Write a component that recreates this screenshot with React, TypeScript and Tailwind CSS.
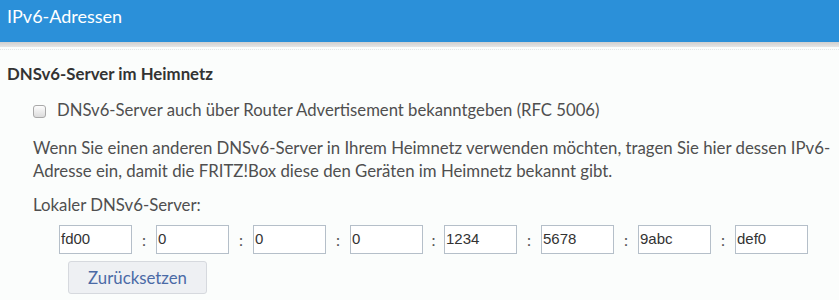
import React from "react";

const parts = ["fd00", "0", "0", "0", "1234", "5678", "9abc", "def0"];

export default function App() {
  return (
    <div className="w-[839px] h-[300px] bg-[#fbfdfc] overflow-hidden text-[#4f4f4f]" style={{ fontFamily: "Lato, 'Noto Sans', sans-serif" }}>
      <div className="h-[42px] bg-[#2b90d9] flex items-center pl-[7px]">
        <span className="text-white text-[18px] leading-none -mt-[10px]">IPv6-Adressen</span>
      </div>
      <div className="h-[5px] bg-gradient-to-b from-[#cfcfcf] to-[#e6e6e6]" />
      <div className="h-[3px] border-b border-dotted border-[#e4e6e8]" />
      <div className="pl-[7px] pt-[14px]">
        <div className="text-[16.8px] font-bold text-[#333] leading-[20px]">DNSv6-Server im Heimnetz</div>
        <div className="flex items-center mt-[17px] pl-[26px] h-[20px]">
          <span className="w-[13px] h-[13px] rounded-[3px] border border-[#a9a9a9] bg-gradient-to-b from-[#fdfdfd] to-[#dcdcdc]" />
          <span className="ml-[11px] text-[16.7px]">DNSv6-Server auch über Router Advertisement bekanntgeben (RFC 5006)</span>
        </div>
        <div className="pl-[26px] mt-[15px] text-[16.8px] leading-[23px] pr-[2px]">
          Wenn Sie einen anderen DNSv6-Server in Ihrem Heimnetz verwenden möchten, tragen Sie hier dessen IPv6-Adresse ein, damit die FRITZ!Box diese den Geräten im Heimnetz bekannt gibt.
        </div>
        <div className="pl-[26px] mt-[11px] text-[16.8px] leading-[23px]">Lokaler DNSv6-Server:</div>
        <div className="flex items-center pl-[52px] mt-[9px]">
          {parts.map((p, i) => (
            <React.Fragment key={i}>
              {i > 0 && (
                <span className={(i === 4 ? "w-[21px]" : "w-[24px]") + " text-center text-[16px] text-[#555]"}>:</span>
              )}
              <div className="w-[73px] h-[29px] border border-[#b5bfc9] bg-white flex items-center pl-[1px] text-[15px] text-[#333]" style={{ fontFamily: "'Liberation Sans', Arial, sans-serif" }}>
                {p}
              </div>
            </React.Fragment>
          ))}
        </div>
        <div className="pl-[61px] mt-[7px]">
          <button className="w-[139px] h-[33px] rounded-[3px] border border-[#d6d9de] bg-[#eef0f3] text-[#4a6aa6] text-[16.8px]">Zurücksetzen</button>
        </div>
      </div>
    </div>
  );
}
